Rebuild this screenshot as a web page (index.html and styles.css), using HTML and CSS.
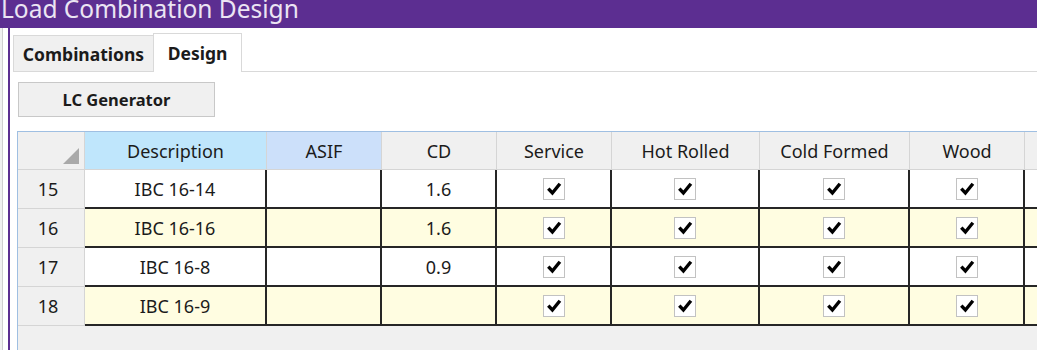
FILE: index.html
```html
<!DOCTYPE html>
<html lang="en">
<head>
<meta charset="UTF-8" />
<title>Load Combination Design</title>
<link rel="stylesheet" href="styles.css">
</head>
<body>

<div class="titlebar"><span class="title">Load Combination Design</span></div>

<div class="shell">
  <div class="window">
    <!-- tabs -->
    <div class="tabs">
      <div class="tab">Combinations</div>
      <div class="tab active">Design</div>
    </div>

    <div class="tab-body">
      <button class="btn">LC Generator</button>

      <div class="grid-wrap">
        <div class="grid">
          <!-- header -->
          <div class="hc corner"><svg width="16" height="16" viewBox="0 0 16 16"><polygon points="16,0 16,16 0,16" fill="#a9a9a9"/></svg></div>
          <div class="hc desc">Description</div>
          <div class="hc asif">ASIF</div>
          <div class="hc">CD</div>
          <div class="hc">Service</div>
          <div class="hc">Hot Rolled</div>
          <div class="hc">Cold Formed</div>
          <div class="hc">Wood</div>
          <div class="hc"></div>

          <div class="row">
            <div class="rh">15</div>
            <div class="c">IBC 16-14</div>
            <div class="c"></div>
            <div class="c">1.6</div>
            <div class="c"><span class="chk"><svg viewBox="0 0 20 20"><path d="M4.3 9.6 L8.4 14 L15.9 4.8"/></svg></span></div>
            <div class="c"><span class="chk"><svg viewBox="0 0 20 20"><path d="M4.3 9.6 L8.4 14 L15.9 4.8"/></svg></span></div>
            <div class="c"><span class="chk"><svg viewBox="0 0 20 20"><path d="M4.3 9.6 L8.4 14 L15.9 4.8"/></svg></span></div>
            <div class="c"><span class="chk"><svg viewBox="0 0 20 20"><path d="M4.3 9.6 L8.4 14 L15.9 4.8"/></svg></span></div>
            <div class="c"></div>
          </div>

          <div class="row alt">
            <div class="rh">16</div>
            <div class="c">IBC 16-16</div>
            <div class="c"></div>
            <div class="c">1.6</div>
            <div class="c"><span class="chk"><svg viewBox="0 0 20 20"><path d="M4.3 9.6 L8.4 14 L15.9 4.8"/></svg></span></div>
            <div class="c"><span class="chk"><svg viewBox="0 0 20 20"><path d="M4.3 9.6 L8.4 14 L15.9 4.8"/></svg></span></div>
            <div class="c"><span class="chk"><svg viewBox="0 0 20 20"><path d="M4.3 9.6 L8.4 14 L15.9 4.8"/></svg></span></div>
            <div class="c"><span class="chk"><svg viewBox="0 0 20 20"><path d="M4.3 9.6 L8.4 14 L15.9 4.8"/></svg></span></div>
            <div class="c"></div>
          </div>

          <div class="row">
            <div class="rh">17</div>
            <div class="c">IBC 16-8</div>
            <div class="c"></div>
            <div class="c">0.9</div>
            <div class="c"><span class="chk"><svg viewBox="0 0 20 20"><path d="M4.3 9.6 L8.4 14 L15.9 4.8"/></svg></span></div>
            <div class="c"><span class="chk"><svg viewBox="0 0 20 20"><path d="M4.3 9.6 L8.4 14 L15.9 4.8"/></svg></span></div>
            <div class="c"><span class="chk"><svg viewBox="0 0 20 20"><path d="M4.3 9.6 L8.4 14 L15.9 4.8"/></svg></span></div>
            <div class="c"><span class="chk"><svg viewBox="0 0 20 20"><path d="M4.3 9.6 L8.4 14 L15.9 4.8"/></svg></span></div>
            <div class="c"></div>
          </div>

          <div class="row alt">
            <div class="rh">18</div>
            <div class="c">IBC 16-9</div>
            <div class="c"></div>
            <div class="c"></div>
            <div class="c"><span class="chk"><svg viewBox="0 0 20 20"><path d="M4.3 9.6 L8.4 14 L15.9 4.8"/></svg></span></div>
            <div class="c"><span class="chk"><svg viewBox="0 0 20 20"><path d="M4.3 9.6 L8.4 14 L15.9 4.8"/></svg></span></div>
            <div class="c"><span class="chk"><svg viewBox="0 0 20 20"><path d="M4.3 9.6 L8.4 14 L15.9 4.8"/></svg></span></div>
            <div class="c"><span class="chk"><svg viewBox="0 0 20 20"><path d="M4.3 9.6 L8.4 14 L15.9 4.8"/></svg></span></div>
            <div class="c"></div>
          </div>
        </div>
      </div>
    </div>
  </div>
</div>

</body>
</html>
```

FILE: styles.css
```css
* {
  box-sizing: border-box;
}

body {
  margin: 0;
  height: 350px;
  overflow: hidden;
  background: #f0f0f0;
  font-family: "Noto Sans", sans-serif;
  color: #1b1b1b;
  display: flex;
  flex-direction: column;
}

/* Заголовок окна */
.titlebar {
  flex: none;
  height: 28px;
  background: #5c2e91;
  overflow: hidden;
  padding-left: 1px;
}

.title {
  display: block;
  font-size: 24.5px;
  line-height: 26px;
  margin-top: -4px;
  color: #ebe4f3;
  white-space: nowrap;
}

.shell {
  flex: 1;
  min-height: 0;
  display: flex;
  margin-left: 2px;
  border-left: 1px solid #cfcfcf;
  background: #fff;
  padding-left: 5px;
}

.window {
  flex: 1;
  min-width: 0;
  display: flex;
  flex-direction: column;
  border-left: 2px solid #5c2e91;
  padding: 5px 0 0 3px;
}

/* Вкладки */
.tabs {
  flex: none;
  display: flex;
  align-items: flex-end;
  height: 39px;
  border-bottom: 1px solid #d9d9d9;
}

.tab {
  width: 141px;
  height: 36px;
  border: 1px solid #d9d9d9;
  border-bottom: none;
  background: #f0f0f0;
  font-weight: bold;
  font-size: 17.5px;
  display: flex;
  align-items: center;
  justify-content: center;
}

.tab.active {
  width: 89px;
  height: 39px;
  margin-left: -1px;
  margin-bottom: -1px;
  background: #fff;
}

.tab-body {
  flex: 1;
  min-height: 0;
  display: flex;
  flex-direction: column;
  align-items: flex-start;
  padding: 10px 0 0 4px;
}

.btn {
  flex: none;
  margin-left: 1px;
  width: 197px;
  height: 35px;
  padding: 0;
  border: 1px solid #c8c8c8;
  background: #f0f0f0;
  font-family: "Noto Sans", sans-serif;
  font-weight: bold;
  font-size: 16.5px;
  color: #1b1b1b;
}

/* Таблица */
.grid-wrap {
  flex: 1;
  align-self: stretch;
  margin-top: 14px;
  border-top: 1px solid #9fbfe2;
  border-left: 1px solid #9fbfe2;
  background: #f0f0f0;
  overflow: hidden;
}

.grid {
  display: grid;
  grid-template-columns: 67px 182px 115px 115px 115px 148px 150px 115px 115px;
  grid-template-rows: 38px;
  grid-auto-rows: 39px;
  font-size: 18px;
}

.row {
  display: contents;
}

.hc {
  background: #f0f0f0;
  border-right: 1px solid #d5d5d5;
  border-bottom: 1px solid #d5d5d5;
  display: flex;
  align-items: center;
  justify-content: center;
}

.hc.corner {
  align-items: flex-end;
  justify-content: flex-end;
  padding: 0 5px 5px 0;
}

.hc.desc {
  background: #bfe6fc;
}

.hc.asif {
  background: #cce0fa;
}

.rh {
  background: #f0f0f0;
  border-right: 1px solid #d5d5d5;
  border-bottom: 1px solid #d5d5d5;
  display: flex;
  align-items: center;
  justify-content: center;
  padding-right: 6px;
}

.c {
  background: #fff;
  border-right: 2px solid #262626;
  border-bottom: 2px solid #262626;
  display: flex;
  align-items: center;
  justify-content: center;
}

.row.alt .c {
  background: #fffde1;
}

.chk {
  flex: none;
  width: 22px;
  height: 22px;
  border: 1px solid #c2c2c2;
  background: #fff;
  display: flex;
  align-items: center;
  justify-content: center;
}

.chk svg {
  flex: none;
  width: 20px;
  height: 20px;
}

.chk path {
  fill: none;
  stroke: #000;
  stroke-width: 3.4;
}
```
